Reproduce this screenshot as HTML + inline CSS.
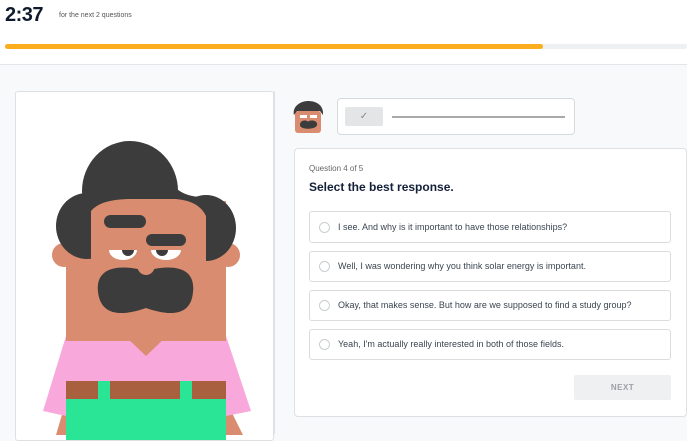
<!DOCTYPE html>
<html><head><meta charset="utf-8"><style>
*{margin:0;padding:0;box-sizing:border-box}
body{width:687px;height:434px;overflow:hidden;background:#f7f9fa;font-family:"Liberation Sans",sans-serif;position:relative;color:#1c2a3a}
.top{position:absolute;left:0;top:0;width:687px;height:65px;background:#fff;border-bottom:1px solid #e3e6e8}
.abs{position:absolute}
.opt{position:absolute;left:309px;width:362px;background:#fff;border:1px solid #d9dde0;border-radius:3px;font-size:9px;color:#3a4550}
.opt .r{position:absolute;left:9px;width:11px;height:11px;border:1px solid #c9ced2;border-radius:50%}
.opt span{position:absolute;left:28px}
</style></head><body>
<div class="top">
<div class="abs" style="left:5px;top:4px;font-size:20px;font-weight:bold;color:#0f1b2d;letter-spacing:-0.5px">2:37</div>
<div class="abs" style="left:59px;top:12px;font-size:7px;color:#555">for the next 2 questions</div>
<div class="abs" style="left:5px;top:44px;width:682px;height:5px;background:#eef0f1;border-radius:3px"></div>
<div class="abs" style="left:5px;top:44px;width:538px;height:5px;background:#fbad1e;border-radius:3px"></div>
</div>
<div class="abs" style="left:15px;top:91px;width:259px;height:350px;background:#fff;border:1px solid #dde1e4;border-radius:3px;overflow:hidden">
<svg width="259" height="350" viewBox="15 91 259 350" style="position:absolute;left:0;top:0">
<path d="M55 434 L65 400 L65 335 L225 335 L225 400 L242 434 Z" fill="#d98c6f"/>
<path d="M65 335 L225 335 L250 410 L225 415 L225 434 L65 434 L65 415 L42 410 Z" fill="#f9a8dc"/>
<rect x="65" y="200" width="160" height="140" fill="#d98c6f"/>
<path d="M122 333 L145 355 L168 333 Z" fill="#d98c6f"/>
<circle cx="63" cy="254" r="12" fill="#d98c6f"/><circle cx="227" cy="254" r="12" fill="#d98c6f"/>
<ellipse cx="129" cy="190" rx="48" ry="50" fill="#3c3c3c"/>
<ellipse cx="86" cy="225" rx="31" ry="33" fill="#3c3c3c"/>
<ellipse cx="205" cy="227" rx="30" ry="33" fill="#3c3c3c"/>
<path d="M165 170 Q172 195 200 196 L200 215 L165 215 Z" fill="#3c3c3c"/>
<path d="M90 262 L90 210 Q100 198 130 198 L175 198 Q198 200 205 215 L205 262 Z" fill="#d98c6f"/>
<rect x="103" y="214" width="42" height="13" rx="6.5" fill="#3c3c3c"/>
<rect x="145" y="233" width="40" height="12" rx="6" fill="#3c3c3c"/>
<path d="M108 249 L136 249 A14 10 0 0 1 108 249 Z" fill="#fff"/>
<path d="M150 249 L180 249 A15 10 0 0 1 150 249 Z" fill="#fff"/>
<path d="M121 249 A6 6 0 0 0 133 249 Z" fill="#3c3c3c"/>
<path d="M155 249 A6 6 0 0 0 167 249 Z" fill="#3c3c3c"/>
<path d="M97 291 C94 265 120 263 145 270 C170 263 195 265 192 291 C190 316 168 315 145 307 C122 315 100 316 97 291Z" fill="#3c3c3c"/>
<ellipse cx="145" cy="264" rx="9" ry="10" fill="#d98c6f"/>
<rect x="65" y="380" width="160" height="60" fill="#2be597"/>
<rect x="65" y="380" width="32" height="18" fill="#a9603f"/><rect x="109" y="380" width="70" height="18" fill="#a9603f"/><rect x="191" y="380" width="34" height="18" fill="#a9603f"/>
</svg>
</div>
<div class="abs" style="left:274px;top:91px;width:1px;height:343px;background:#dde1e4"></div>
<svg class="abs" style="left:292px;top:99px" width="34" height="36" viewBox="0 0 34 36">
<rect x="3" y="12" width="26" height="22" rx="3" fill="#d98c6f"/>
<path d="M2 16 C0 8 8 2 16 2 C24 2 32 6 31 16 L28 12 L5 12Z" fill="#3c3c3c"/>
<path d="M8 26 C8 20 16 21 16 23 C16 21 26 20 25 26 C24 31 8 31 8 26Z" fill="#3c3c3c"/>
<rect x="8" y="16" width="7" height="3" fill="#fff"/><rect x="18" y="16" width="7" height="3" fill="#fff"/>
</svg>
<div class="abs" style="left:337px;top:98px;width:238px;height:37px;background:#fff;border:1px solid #d6dadd;border-radius:4px"></div>
<div class="abs" style="left:345px;top:107px;width:38px;height:19px;background:#e3e5e7;border-radius:2px;color:#888;font-size:10px;text-align:center;line-height:19px">✓</div>
<div class="abs" style="left:392px;top:116px;width:173px;height:2px;background:#a9a9a9"></div>
<div class="abs" style="left:294px;top:148px;width:393px;height:269px;background:#fff;border:1px solid #dde1e4;border-radius:4px"></div>
<div class="abs" style="left:309px;top:164px;font-size:8px;color:#666">Question 4 of 5</div>
<div class="abs" style="left:309px;top:180px;font-size:12px;font-weight:bold;color:#14203a">Select the best response.</div>
<div class="opt" style="top:211px;height:32px"><div class="r" style="top:10px"></div><span style="top:10px">I see. And why is it important to have those relationships?</span></div>
<div class="opt" style="top:251px;height:31px"><div class="r" style="top:9px"></div><span style="top:9px">Well, I was wondering why you think solar energy is important.</span></div>
<div class="opt" style="top:290px;height:31px"><div class="r" style="top:9px"></div><span style="top:9px">Okay, that makes sense. But how are we supposed to find a study group?</span></div>
<div class="opt" style="top:329px;height:31px"><div class="r" style="top:9px"></div><span style="top:9px">Yeah, I'm actually really interested in both of those fields.</span></div>
<div class="abs" style="left:574px;top:375px;width:97px;height:25px;background:#eef0f1;border-radius:2px;font-size:8px;font-weight:bold;color:#9aa0a5;text-align:center;line-height:25px;letter-spacing:0.5px">NEXT</div>
</body></html>
